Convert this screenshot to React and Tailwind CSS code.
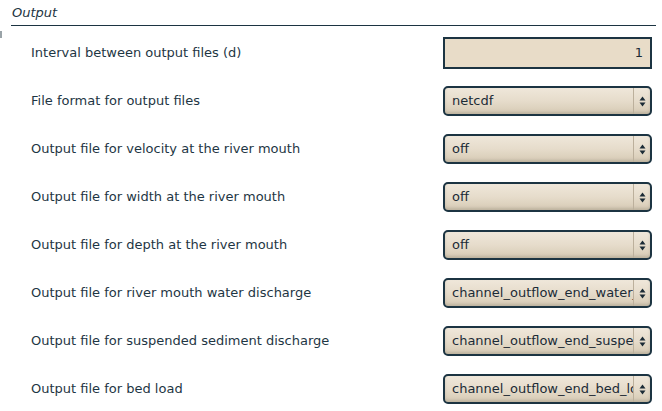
import React from "react";

const rows = [
  { label: "Interval between output files (d)", kind: "input", value: "1" },
  { label: "File format for output files", kind: "select", value: "netcdf" },
  { label: "Output file for velocity at the river mouth", kind: "select", value: "off" },
  { label: "Output file for width at the river mouth", kind: "select", value: "off" },
  { label: "Output file for depth at the river mouth", kind: "select", value: "off" },
  { label: "Output file for river mouth water discharge", kind: "select", value: "channel_outflow_end_water_discharge" },
  { label: "Output file for suspended sediment discharge", kind: "select", value: "channel_outflow_end_suspended_sediment" },
  { label: "Output file for bed load", kind: "select", value: "channel_outflow_end_bed_load" },
];

const Arrows = () => (
  <svg width="7" height="11" viewBox="0 0 7 11" className="text-[#1b2b36]">
    <path d="M3.5 0.5 L6.5 4.5 L0.5 4.5 Z" fill="currentColor" />
    <path d="M3.5 10.5 L6.5 6.5 L0.5 6.5 Z" fill="currentColor" />
  </svg>
);

const Field = ({ row }) => {
  if (row.kind === "input") {
    return (
      <div className="w-[209px] h-[32px] border-2 border-[#1c3442] bg-[#e8dcc8] flex items-center justify-end pr-[7px] text-[13px] text-[#1b2b36]">
        {row.value}
      </div>
    );
  }
  return (
    <div className="w-[209px] h-[30px] rounded-[5px] border-2 border-[#1c3442] bg-gradient-to-b from-[#efe7da] via-[#e6dccb] to-[#d6cab4] shadow-[inset_0_-2px_3px_rgba(0,0,0,0.12)] flex items-center text-[13px] text-[#1b2b36] overflow-hidden">
      <div className="flex-1 min-w-0 pl-[7px] pr-[2px] overflow-hidden whitespace-nowrap">{row.value}</div>
      <div className="w-[17px] shrink-0 h-full border-l border-[#bcb09c] flex items-center justify-center">
        <Arrows />
      </div>
    </div>
  );
};

export default function App() {
  return (
    <div className="w-[662px] h-[411px] bg-white overflow-hidden relative" style={{ fontFamily: '"DejaVu Sans", "Liberation Sans", sans-serif' }}>
      <div className="absolute left-0 top-[31px] w-[2px] h-[7px] bg-[#9aa3a8]" />
      <div className="pl-[11px] pr-[6px]">
        <div className="h-[26px] border-b border-[#1c3442] flex items-center pl-[1px] pt-[1px] text-[13px] italic text-[#1c3442]">
          Output
        </div>
        <div className="pt-[3px] flex flex-col">
          {rows.map((row) => (
            <div key={row.label} className="h-[48px] flex items-center justify-between pl-[20px] pr-[4px]">
              <span className="text-[13px] text-[#1e3644]">{row.label}</span>
              <Field row={row} />
            </div>
          ))}
        </div>
      </div>
    </div>
  );
}
